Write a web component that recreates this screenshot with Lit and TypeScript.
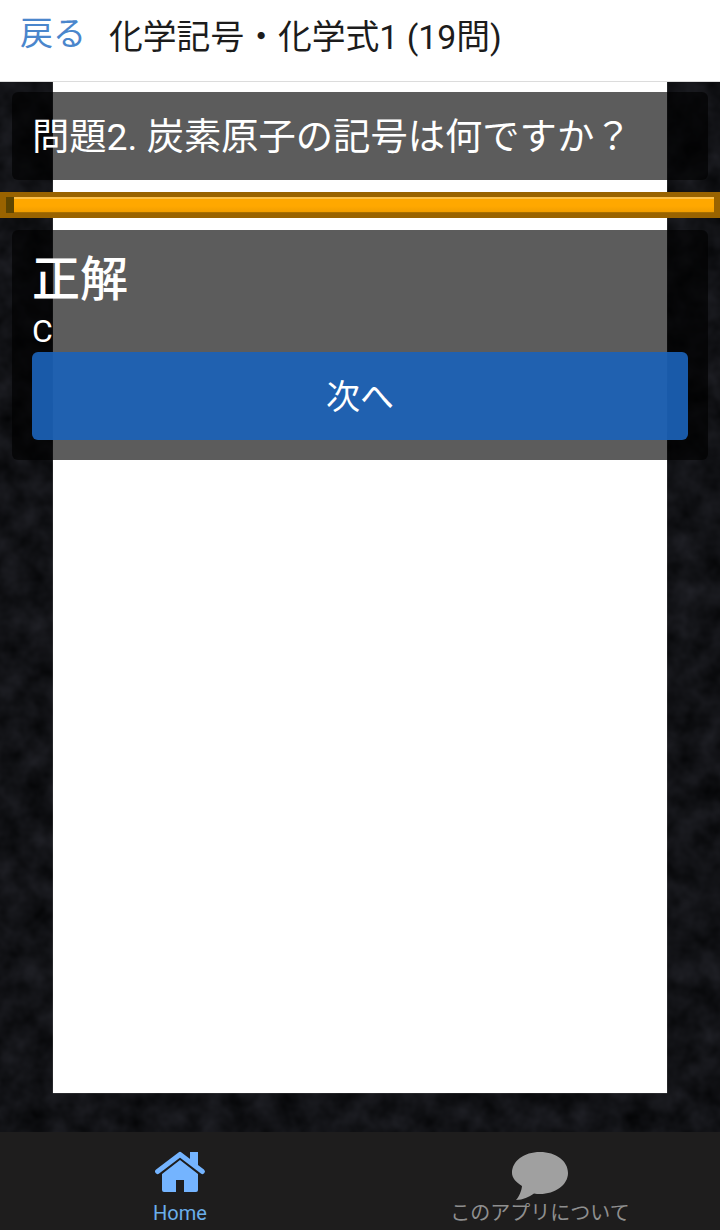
import { LitElement, html, css } from "lit";
import { customElement } from "lit/decorators.js";

@customElement("app-root")
export class AppRoot extends LitElement {
  static styles = css`
    :host {
      display: flex;
      flex-direction: column;
      width: 720px;
      height: 1230px;
      overflow: hidden;
      font-family: Roboto, "Noto Sans CJK JP", sans-serif;
      background: #fff;
    }
    .header {
      border-bottom: 1px solid #dcdcdc;
      display: flex;
      align-items: flex-start;
      gap: 23px;
      padding: 12px 0 0 20px;
      box-sizing: border-box;
      height: 82px;
      background: #fff;
    }
    .back { font-size: 33px; line-height: 44px; color: #4a86cc; }
    .title { font-size: 33.8px; line-height: 46px; margin-top: 3px; color: #1c1c1c; white-space: nowrap; }
    .stage {
      height: 1050px;
      display: grid;
      background-color: #0d0e11;
      overflow: hidden;
    }
    .stage > * { grid-area: 1 / 1; min-width: 0; }
    .texture { width: 720px; height: 1050px; display: block; }
    .sheet {
      width: 614px;
      height: 1011px;
      margin-left: 53px;
      background: #fff;
      box-shadow: 0 0 1px #888;
    }
    .content {
      display: flex;
      flex-direction: column;
      padding-top: 10px;
      gap: 12px;
    }
    .panel {
      margin: 0 12px;
      background: rgba(0, 0, 0, 0.64);
      border-radius: 6px;
      color: #fff;
      box-sizing: border-box;
    }
    .question {
      height: 88px;
      display: flex;
      align-items: center;
      padding: 0 0 4px 20px;
      font-size: 37.3px;
      white-space: nowrap;
    }
    .bar {
      height: 26px;
      background: #996300;
      padding: 5px 6px;
      box-sizing: border-box;
      display: flex;
    }
    .bar-empty { width: 8px; background: #5e4500; }
    .bar-fill {
      flex: 1;
      background: linear-gradient(#fcc04a 0 2px, #ffa800 2px 60%, #f29e00 100%);
      border-bottom: 1px solid #a86f00;
    }
    .answer {
      height: 230px;
      padding: 20px 20px 0;
      display: flex;
      flex-direction: column;
    }
    .answer h2 {
      margin: 0;
      font-weight: 500;
      font-size: 48px;
      line-height: 60px;
    }
    .answer p {
      margin: 0;
      font-size: 32px;
      line-height: 42px;
    }
    .next {
      height: 88px;
      background: rgba(27, 98, 183, 0.92);
      border-radius: 6px;
      display: flex;
      align-items: center;
      justify-content: center;
      padding-bottom: 4px;
      box-sizing: border-box;
      font-size: 34px;
      color: #fff;
    }
    .tabs {
      height: 98px;
      background: #1e1d1d;
      display: grid;
      grid-template-columns: 1fr 1fr;
    }
    .tab {
      display: flex;
      flex-direction: column;
      align-items: center;
      padding-top: 18px;
      box-sizing: border-box;
      font-size: 20px;
      line-height: 24px;
      color: #8f8f8f;
    }
    .tab svg { display: block; height: 50px; }
    .tab.on { color: #6aaeea; }
    .tab span { margin-top: 1px; white-space: nowrap; }
  `;

  render() {
    return html`
      <div class="header">
        <span class="back">戻る</span>
        <span class="title">化学記号・化学式1 (19問)</span>
      </div>
      <div class="stage">
        <svg class="texture" viewBox="0 0 720 1050" preserveAspectRatio="none">
          <filter id="rock" x="0" y="0" width="100%" height="100%" color-interpolation-filters="sRGB">
            <feTurbulence type="fractalNoise" baseFrequency="0.04" numOctaves="3" seed="7" />
            <feColorMatrix
              values="0.13 0 0 0 0.005
                      0.13 0 0 0 0.008
                      0.15 0 0 0 0.012
                      0 0 0 0 1"
            />
          </filter>
          <rect width="720" height="1050" filter="url(#rock)" />
        </svg>
        <div class="sheet"></div>
        <div class="content">
          <div class="panel question">問題2. 炭素原子の記号は何ですか？</div>
          <div class="bar"><div class="bar-empty"></div><div class="bar-fill"></div></div>
          <div class="panel answer">
            <h2>正解</h2>
            <p>C</p>
            <div class="next">次へ</div>
          </div>
        </div>
      </div>
      <div class="tabs">
        <div class="tab on">
          <svg width="52" height="50" viewBox="0 0 52 50">
            <path fill="#74b4ff" d="M36 2 H44 V16 L36 10 Z" />
            <path fill="#74b4ff" d="M8 24 L26 10 L44 24 V40 a2 2 0 0 1 -2 2 H30 V30 H22 V42 H10 a2 2 0 0 1 -2 -2 Z" />
            <path fill="none" stroke="#1e1d1d" stroke-width="1.6" stroke-linecap="round" stroke-linejoin="miter" d="M3 25 L26 8.3 L49 25" />
            <path fill="none" stroke="#74b4ff" stroke-width="5" stroke-linecap="round" stroke-linejoin="round" d="M3.6 21.5 L26 4.4 L48.4 21.5" />
          </svg>
          <span>Home</span>
        </div>
        <div class="tab">
          <svg width="58" height="50" viewBox="0 0 58 50">
            <path fill="#a0a0a0" d="M29 2 C45 2 57 11 57 23 C57 35 44 44 29 44 C27 44 25 44 23 43.5 C18 47 12 50 5 50 C8 47 10.500 41 11 36 C5 32 1 28 1 23 C1 11 13 2 29 2 Z" />
          </svg>
          <span>このアプリについて</span>
        </div>
      </div>
    `;
  }
}
